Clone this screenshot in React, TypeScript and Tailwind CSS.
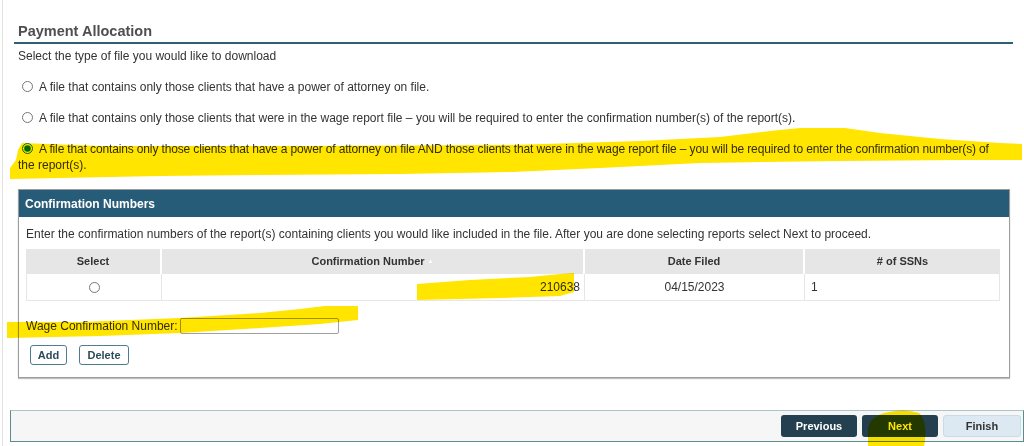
import type { ReactNode } from "react";

const body = "font-['Liberation_Sans',Arial,sans-serif]";
const head = "font-['Liberation_Sans',Arial,sans-serif] font-bold";

type Report = {
  confirmation: string;
  filed: string;
  ssns: string;
};

const reports: Report[] = [{ confirmation: "210638", filed: "04/15/2023", ssns: "1" }];

function Radio({ checked }: { checked?: boolean }) {
  return (
    <input
      type="radio"
      name="filetype"
      checked={!!checked}
      readOnly
      className="m-0 mr-[6px] ml-[4px] inline-block h-[11px] w-[11px] align-[-1px] accent-[#0075ff]"
    />
  );
}

function RadioLine({ children }: { children: ReactNode }) {
  return (
    <p className="pl-[4px] text-[12px] leading-[14px] text-[#333]">
      <Radio />
      {children}
    </p>
  );
}

function Highlights() {
  return (
    <svg
      className="pointer-events-none absolute inset-0 h-full w-full mix-blend-multiply"
      viewBox="0 0 1024 446"
      aria-hidden
    >
      <g fill="#ffe500">
        <path d="M22 143 L100 146 L300 146 L512 145 L640 141 L720 137 L770 131 L800 128 L845 128 L880 133 L940 139 L1000 143 L1022 144 L1022 160 L960 160 L840 161 L700 163 L600 168 L512 172 L400 174 L260 175 L160 176 L60 178 L10 179 L10 168 L16 160 L18 150 Z" />
        <path d="M417 284 L470 280 L530 277 L560 274 L574 273 L574 292 L560 296 L500 298 L417 300 Z" />
        <path d="M7 322 L80 322 L180 318 L260 313 L300 309 L325 306 L358 306 L358 320 L320 324 L260 328 L180 333 L100 336 L7 338 Z" />
        <path d="M868 446 L868 428 Q870 417 884 413 Q904 408 919 413 Q927 420 925 440 L924 446 Z" />
      </g>
    </svg>
  );
}

export default function App() {
  return (
    <div className={`relative h-[446px] w-[1024px] overflow-hidden bg-white ${body}`}>
      <div className="ml-[2px] h-full border-l border-[#e2e2e2]">
        <div className="pl-[11px] pr-[11px]">
          <div className="flex h-[44px] items-end border-b-2 border-[#2e5f74] pb-[2px] pl-[4px]">
            <h1 className={`${head} text-[14.5px] leading-[18px] text-[#4f4f4f]`}>Payment Allocation</h1>
          </div>

          <p className="mt-[5px] pl-[4px] text-[12px] leading-[14px] text-[#333]">
            Select the type of file you would like to download
          </p>

          <div className="mt-[17px]">
            <RadioLine>A file that contains only those clients that have a power of attorney on file.</RadioLine>
          </div>
          <div className="mt-[17px]">
            <RadioLine>
              A file that contains only those clients that were in the wage report file – you will be required to enter the
              confirmation number(s) of the report(s).
            </RadioLine>
          </div>
          <p className="mt-[16px] pl-[4px] text-[12px] leading-[16px] text-[#333]">
            <span className="whitespace-nowrap tracking-[-0.14px]">
              <Radio checked />
              A file that contains only those clients that have a power of attorney on file AND those clients that were in the wage
              report file – you will be required to enter the confirmation number(s) of
            </span>
            <br />
            the report(s).
          </p>

          <section className="mt-[16px] ml-[4px] w-[992px] border border-[#9c9c9c] shadow-[0_1px_1px_rgba(0,0,0,0.25)]">
            <div className="flex h-[27px] items-center bg-[#275c79] px-[6px]">
              <h2 className={`${head} text-[12px] text-white`}>Confirmation Numbers</h2>
            </div>
            <div className="px-[7px] pb-[12px]">
              <p className="pt-[10px] text-[12px] leading-[14px] text-[#333]">
                Enter the confirmation numbers of the report(s) containing clients you would like included in the file. After you
                are done selecting reports select Next to proceed.
              </p>

              <div className="mt-[8px] w-[974px] text-[12px] text-[#333]">
                <div className="grid h-[25px] grid-cols-[134px_423px_220px_197px] bg-[#e6e6e6]">
                  <div className={`${head} flex items-center justify-center text-[11px]`}>Select</div>
                  <div className={`${head} flex items-center justify-center gap-[3px] border-l-2 border-white text-[11px]`}>
                    Confirmation Number
                    <span className="text-[6px] text-white">▲</span>
                  </div>
                  <div className={`${head} flex items-center justify-center border-l-2 border-white text-[11px]`}>
                    Date Filed
                  </div>
                  <div className={`${head} flex items-center justify-center border-l-2 border-white text-[11px]`}>
                    # of SSNs
                  </div>
                </div>
                {reports.map((r) => (
                  <div
                    key={r.confirmation}
                    className="grid h-[27px] grid-cols-[134px_423px_220px_197px] border-x border-b border-[#e6e6e6]"
                  >
                    <div className="flex items-center justify-center">
                      <input type="radio" name="report" readOnly checked={false} className="m-0 h-[11px] w-[11px]" />
                    </div>
                    <div className="flex items-center justify-end border-l border-[#e6e6e6] pr-[4px]">{r.confirmation}</div>
                    <div className="flex items-center justify-center border-l border-[#e6e6e6]">{r.filed}</div>
                    <div className="flex items-center border-l border-[#e6e6e6] pl-[6px]">{r.ssns}</div>
                  </div>
                ))}
              </div>

              <div className="mt-[17px] flex h-[16px] items-center text-[12px] text-[#333]">
                <label htmlFor="wage">Wage Confirmation Number:</label>
                <input
                  id="wage"
                  type="text"
                  className="ml-[2px] h-[16px] w-[159px] rounded-[2px] border border-[#a0a0a0] bg-white"
                />
              </div>

              <div className="mt-[11px] ml-[4px] flex gap-[12px]">
                <button
                  type="button"
                  className={`${head} h-[20px] w-[37px] rounded-[3px] border border-[#4d7c93] bg-white text-[11px] text-[#2c4b5b]`}
                >
                  Add
                </button>
                <button
                  type="button"
                  className={`${head} h-[20px] w-[50px] rounded-[3px] border border-[#4d7c93] bg-white text-[11px] text-[#2c4b5b]`}
                >
                  Delete
                </button>
              </div>
            </div>
          </section>
        </div>

        <div className="mt-[32px] ml-[7px] flex h-[32px] items-center justify-end border border-[#5d8c8c] border-t-[#a9c5c5] bg-[#f6f6f6] pr-[2px]">
          <div className="flex gap-[5px]">
            <button
              type="button"
              className={`${head} h-[22px] w-[76px] rounded-[3px] bg-[#243f50] text-[11px] text-white`}
            >
              Previous
            </button>
            <button
              type="button"
              className={`${head} h-[22px] w-[76px] rounded-[3px] bg-[#243f50] text-[11px] text-white`}
            >
              Next
            </button>
            <button
              type="button"
              className={`${head} h-[22px] w-[78px] rounded-[3px] border border-[#c9dbe7] bg-[#dce9f3] text-[11px] text-[#333]`}
            >
              Finish
            </button>
          </div>
        </div>
      </div>
      <Highlights />
    </div>
  );
}
